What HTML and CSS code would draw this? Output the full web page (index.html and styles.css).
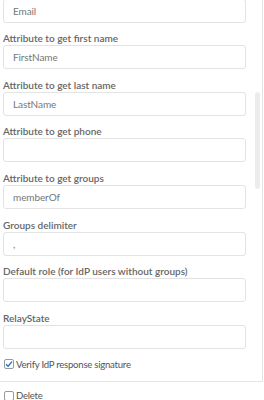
FILE: index.html
```html
<!DOCTYPE html>
<html>
<head>
<title>IdP settings</title>
<link rel="stylesheet" href="styles.css">
</head>
<body>

<div class="panel">
    <div class="form">
        <input type="text" class="input first" value="Email">

        <label class="label">Attribute to get first name</label>
        <input type="text" class="input" value="FirstName">

        <label class="label">Attribute to get last name</label>
        <input type="text" class="input" value="LastName">

        <label class="label">Attribute to get phone</label>
        <input type="text" class="input" value="">

        <label class="label">Attribute to get groups</label>
        <input type="text" class="input" value="memberOf">

        <label class="label">Groups delimiter</label>
        <input type="text" class="input" value=",">

        <label class="label">Default role (for IdP users without groups)</label>
        <input type="text" class="input" value="">

        <label class="label">RelayState</label>
        <input type="text" class="input" value="">

        <div class="check">
            <span class="box">
                <svg width="8" height="8" viewBox="0 0 8 8"><path d="M1 4.2 L3.1 6.3 L7 1.6" fill="none" stroke="#2b6fd6" stroke-width="1.4"/></svg>
            </span>
            <span>Verify IdP response signature</span>
        </div>
    </div>
    <div class="scrollbar">
        <div class="thumb"></div>
    </div>
</div>

<div class="check delete">
    <span class="box"></span>
    <span>Delete</span>
</div>

</body>
</html>
```
FILE: styles.css
```css
body {
    margin: 0;
    background: #fff;
    font-family: "Lato", "Open Sans", sans-serif;
    color: #555;
    overflow: hidden;
}
.panel {
    display: flex;
    width: 262px;
    height: 381px;
    border-right: 1px solid #e4e4e4;
    border-bottom: 1px solid #e4e4e4;
    overflow: hidden;
}
.form {
    width: 243px;
    padding-left: 3px;
    display: flex;
    flex-direction: column;
}
.input {
    box-sizing: border-box;
    width: 243px;
    height: 24px;
    margin: 0;
    padding: 0 9px;
    border: 1px solid #e3e3e3;
    border-radius: 3px;
    font-family: inherit;
    font-size: 10px;
    letter-spacing: -0.1px;
    color: #777;
    outline: none;
}
.input.first {
    margin-top: -1.3px;
}
.label {
    display: block;
    margin-top: 9.6px;
    line-height: 13px;
    font-size: 10px;
    font-weight: 600;
    color: #666;
}
.check {
    display: flex;
    align-items: center;
    gap: 2px;
    margin-top: 10px;
    font-size: 9.6px;
    letter-spacing: -0.25px;
    color: #555;
}
.box {
    box-sizing: border-box;
    width: 10px;
    height: 10px;
    margin-left: 1px;
    border: 1px solid #999;
    border-radius: 2px;
    background: #fff;
    display: flex;
    align-items: center;
    justify-content: center;
}
.scrollbar {
    margin-left: 9px;
    width: 5px;
}
.thumb {
    margin-top: 92px;
    height: 97px;
    border-radius: 3px;
    background: #ececec;
}
.delete {
    margin-top: 8px;
    padding-left: 3px;
}
```
